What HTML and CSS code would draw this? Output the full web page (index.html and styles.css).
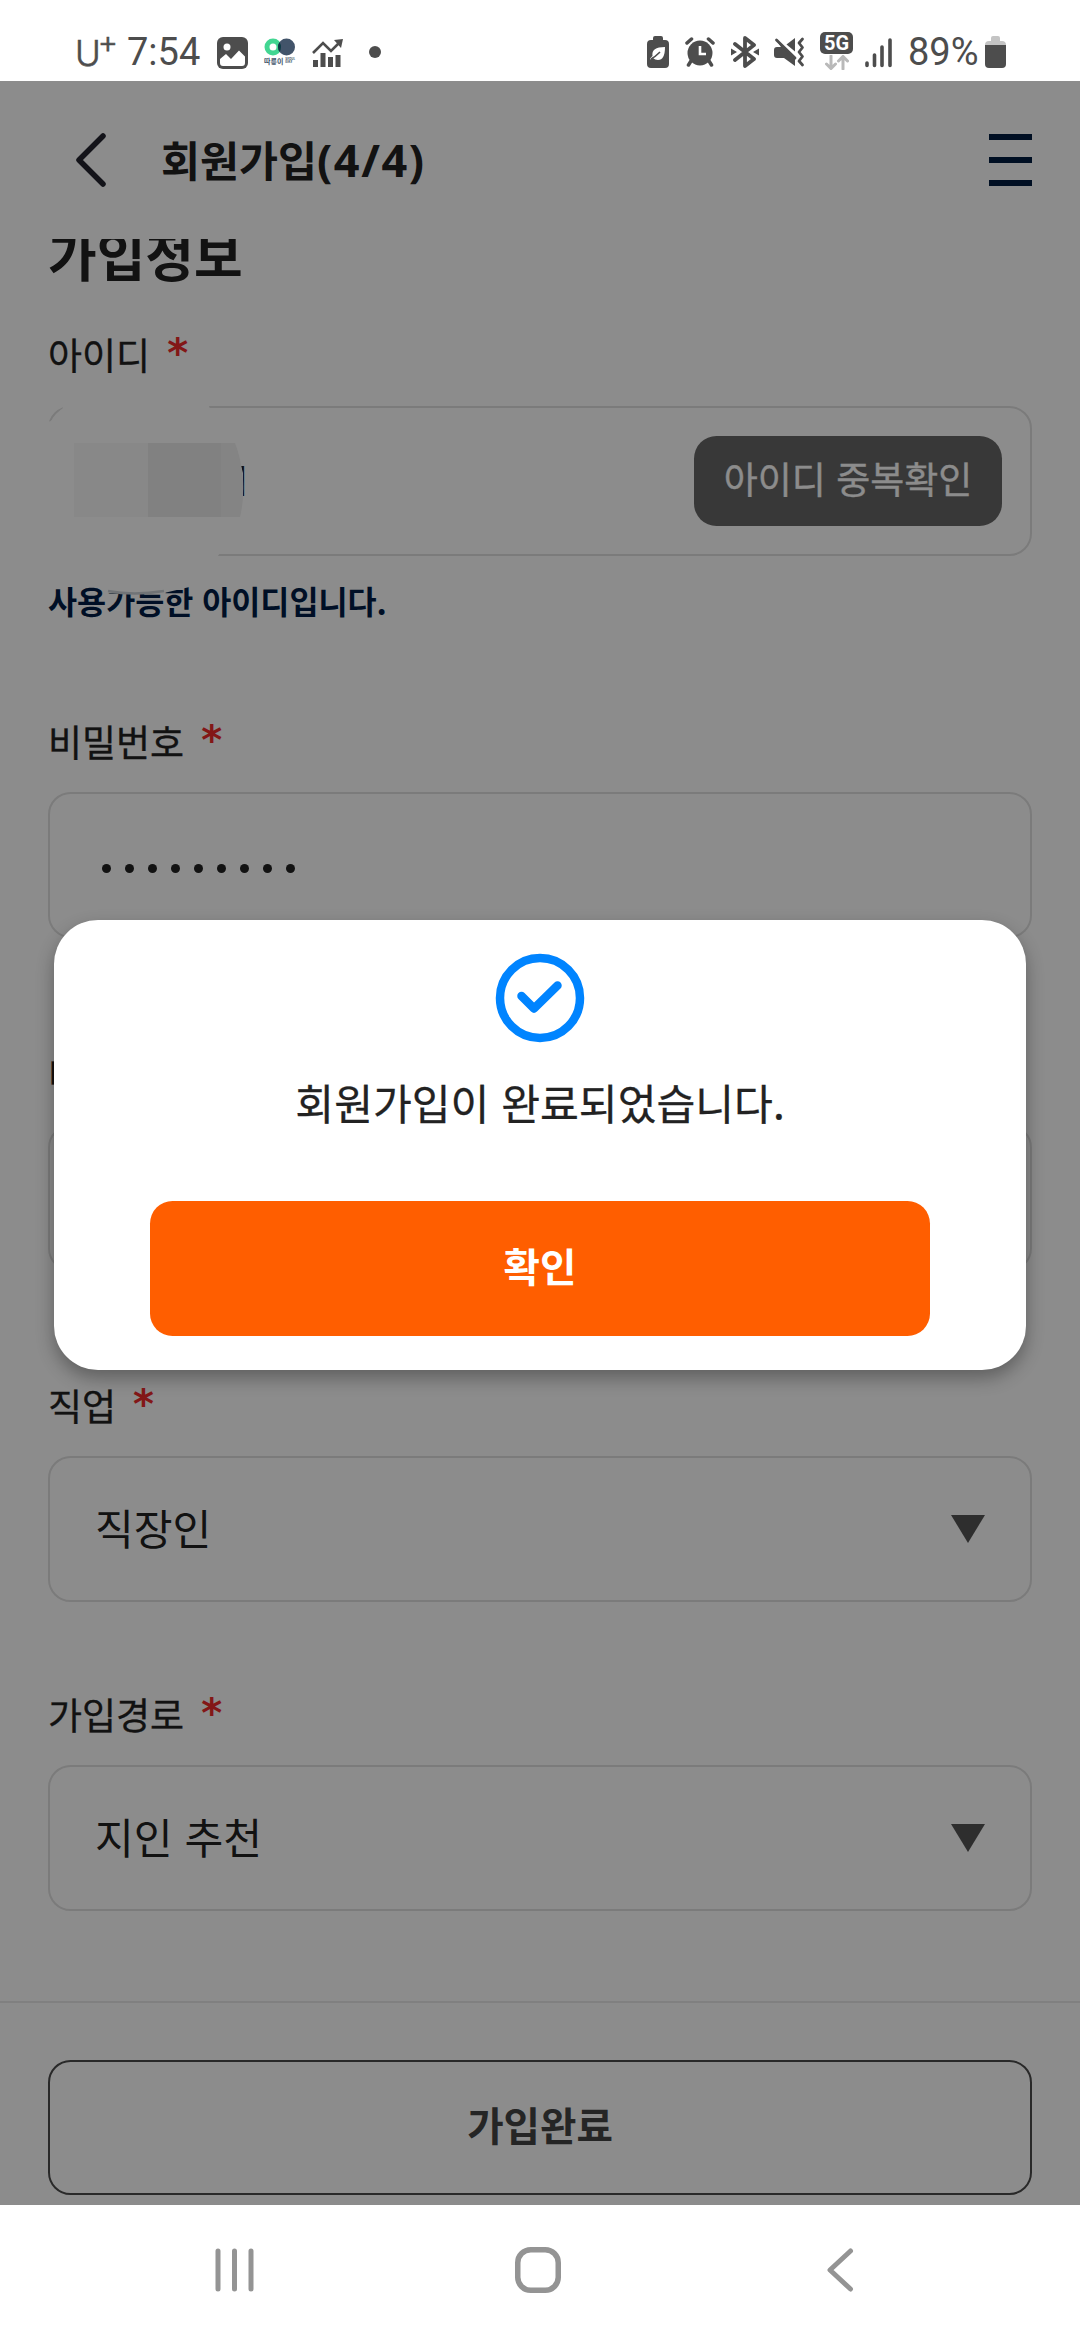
FILE: index.html
```html
<!DOCTYPE html>
<html lang="ko">
<head>
<meta charset="utf-8">
<title>회원가입</title>
<link rel="stylesheet" href="styles.css">
</head>
<body>
<div class="status">
  <div class="status-left">
    <span class="carrier">U<span class="plus">+</span></span>
    <span class="clock">7:54</span>
    <svg class="ic-image" width="32" height="32" viewBox="0 0 32 32"><rect x="0" y="0" width="31" height="32" rx="6" fill="#4d4d4d"/><circle cx="10" cy="10" r="3.500" fill="#fff"/><path d="M3 22 L9 17 L14 22 L22 13.500 L28 19.500 V26 Q28 29 25 29 H6 Q3 29 3 26Z" fill="#fff"/></svg>
    <span class="bike">
      <svg width="32" height="18" viewBox="0 0 32 18"><circle cx="9" cy="9" r="6" fill="none" stroke="#42d692" stroke-width="5"/><circle cx="22.500" cy="9" r="8.500" fill="#42546a"/><path d="M15.500 4 Q18.500 9 15.500 14 Q12.500 9 15.500 4Z" fill="#0d3b46"/></svg>
      <span class="bike-name">따릉이<small>SEOUL<br>BIKE</small></span>
    </span>
    <svg class="ic-chart" width="32" height="30" viewBox="0 0 32 30"><path d="M1 14 L11 4 L19 12 L28 3" fill="none" stroke="#4d4d4d" stroke-width="2.600"/><path d="M22 1 L31 0 L29 9Z" fill="#4d4d4d"/><path d="M1 21h5v7H1zM8.500 14h5v14h-5zM16 18h5v10h-5zM23.500 16h5v12h-5z" fill="#4d4d4d"/></svg>
    <span class="dot"></span>
  </div>
  <div class="status-right">
    <svg class="ic-eco" width="22" height="32" viewBox="0 0 22 32"><path d="M6 4V2Q6 0 8 0h6q2 0 2 2v2h2q4 0 4 4v20q0 4-4 4H4q-4 0-4-4V8q0-4 4-4z" fill="#4d4d4d"/><path d="M18 11 Q18 24 11 24 Q8 24 6 22 Q4 24 3 23 Q4 21 5.500 20 Q4 11 18 11Z" fill="#fff"/><path d="M4 23 Q8 21 13 16" stroke="#4d4d4d" stroke-width="1.600" fill="none"/></svg>
    <svg class="ic-alarm" width="30" height="30" viewBox="0 0 30 30"><circle cx="15" cy="16" r="12.500" fill="#4d4d4d"/><path d="M2 6 L6.500 2 M28 6 L23.500 2" stroke="#4d4d4d" stroke-width="3.500" stroke-linecap="round"/><path d="M6 24 L3.500 28 M24 24 L26.500 28" stroke="#4d4d4d" stroke-width="3.500" stroke-linecap="round"/><path d="M15 9v8h6" fill="none" stroke="#fff" stroke-width="2.600"/></svg>
    <svg class="ic-bt" width="28" height="32" viewBox="0 0 28 32"><path d="M4 8 L23 23 L14 30 V2 L23 9 L4 24" fill="none" stroke="#4d4d4d" stroke-width="3.800" stroke-linejoin="round" stroke-linecap="round"/><path d="M0 12.500 L6 16 L0 19.500Z M28 12.500 L22 16 L28 19.500Z" fill="#4d4d4d"/></svg>
    <svg class="ic-mute" width="31" height="30" viewBox="0 0 31 30"><path d="M2 3 L21 22 V29 L10 21 H3 Q0 21 0 18 V13 Q0 10 3 10 H7Z" fill="#4d4d4d"/><path d="M2.500 3 L21 21" stroke="#4d4d4d" stroke-width="2.800" stroke-linecap="round"/><path d="M12.500 7.500 L21 1 V14.500Z" fill="#4d4d4d"/><path d="M28.500 2 L25 6 L28.500 10.500 L25 15 L28.500 19.500 L25 24 L28.500 28" fill="none" stroke="#4d4d4d" stroke-width="2.800" stroke-linejoin="round" stroke-linecap="round"/></svg>
    <div class="net"><span class="net-badge">5G</span><svg width="24" height="15" viewBox="0 0 24 15"><path d="M6 1v12M1.500 9 L6 13.500 L10.500 9M18 14V2M13.500 6 L18 1.500 L22.500 6" fill="none" stroke="#b9b9b9" stroke-width="3" stroke-linecap="round"/></svg></div>
    <svg class="ic-signal" width="28" height="30" viewBox="0 0 28 30"><path d="M2 25v2.500M9.500 17v10.500M17 9v18.500M25 2v25.500" stroke="#4d4d4d" stroke-width="3.600" stroke-linecap="round"/></svg>
    <span class="percent">89%</span>
    <svg class="ic-batt" width="22" height="32" viewBox="0 0 22 32"><path d="M6 5V2Q6 0 8 0h5q2 0 2 2v3h2q4 0 4 4v1H0V9q0-4 4-4z" fill="#c4c4c4"/><path d="M0 9h21v19q0 4-4 4H4q-4 0-4-4z" fill="#4d4d4d"/></svg>
  </div>
</div>

<main class="app">
  <header class="header">
    <svg width="32" height="56" viewBox="0 0 32 56"><path d="M28 4 L4 28 L28 52" fill="none" stroke="#23242f" stroke-width="5.500" stroke-linecap="round" stroke-linejoin="round"/></svg>
    <h1 class="title">회원가입<span class="step">(4/4)</span></h1>
    <div class="menu"><i></i><i></i><i></i></div>
  </header>
  <section class="form">
    <h2 class="heading">가입정보</h2>
    <div class="field field-id">
      <div class="label">아이디<span class="req">*</span></div>
      <div class="box box-id">
        <span class="id-value">1</span>
        <button class="check-btn">아이디 중복확인</button>
      </div>
      <p class="helper">사용가능한 아이디입니다.</p>
      <svg class="mask" width="210" height="200" viewBox="0 0 210 200">
        <path d="M-1 19 L3 18 Q8 10 15 5 V0 H160 L162 6 L187 40 L195 70 V100 L172 150 L150 182 L116 190 H60 L50 178 H-1Z" fill="#fff"/>
        <path d="M26 40H100V114H26Z" fill="#f8f8f8"/><path d="M100 40H173V114H100Z" fill="#ececec"/><path d="M173 40H187Q193 55 195 77Q196 98 192 114H173Z" fill="#f0f0f0"/>
        <path d="M60 188 Q85 193 116 188" fill="none" stroke="#ccd2d8" stroke-width="2.500"/>
      </svg>
    </div>
    <div class="field field-pw">
      <div class="label">비밀번호<span class="req">*</span></div>
      <div class="box"><span class="dots"><i></i><i></i><i></i><i></i><i></i><i></i><i></i><i></i><i></i></span></div>
    </div>
    <div class="field field-pw2">
      <div class="label">비밀번호 확인<span class="req">*</span></div>
      <div class="box"></div>
    </div>
    <div class="field field-job">
      <div class="label">직업<span class="req">*</span></div>
      <div class="box"><span class="value">직장인</span><svg width="34" height="28" viewBox="0 0 34 28"><path d="M0 0H34L17 28Z" fill="#555"/></svg></div>
    </div>
    <div class="field field-path">
      <div class="label">가입경로<span class="req">*</span></div>
      <div class="box"><span class="value">지인 추천</span><svg width="34" height="28" viewBox="0 0 34 28"><path d="M0 0H34L17 28Z" fill="#555"/></svg></div>
    </div>
  </section>
  <footer class="footer"><button class="submit">가입완료</button></footer>

  <div class="overlay">
    <div class="modal">
      <svg width="90" height="90" viewBox="0 0 90 90"><circle cx="45" cy="45" r="40" fill="none" stroke="#0084ff" stroke-width="8.500"/><path d="M26.500 43 L39 55.500 L62.500 32.500" fill="none" stroke="#0084ff" stroke-width="8.500" stroke-linecap="round" stroke-linejoin="round"/></svg>
      <p class="message">회원가입이 완료되었습니다.</p>
      <button class="ok">확인</button>
    </div>
  </div>
</main>

<nav class="nav">
  <svg width="40" height="46" viewBox="0 0 40 46"><path d="M4 4v38M20.500 4v38M37 4v38" stroke="#949494" stroke-width="5" stroke-linecap="round"/></svg>
  <svg class="home" width="46" height="46" viewBox="0 0 46 46"><rect x="2.750" y="2.750" width="40.500" height="40.500" rx="13" fill="none" stroke="#949494" stroke-width="5.500"/></svg>
  <svg width="28" height="46" viewBox="0 0 28 46"><path d="M24.500 4 L4 23 L24.500 42" fill="none" stroke="#949494" stroke-width="5" stroke-linecap="round" stroke-linejoin="round"/></svg>
</nav>
</body>
</html>
```
FILE: styles.css
```css
* { box-sizing: border-box; margin: 0; padding: 0; }
body {
  width: 1080px; height: 2340px; overflow: hidden;
  display: flex; flex-direction: column;
  background: #fff; color: #222;
  font-family: "Noto Sans CJK KR", "Noto Sans", sans-serif;
}
button { font-family: inherit; border: 0; }
svg { display: block; flex: none; }

/* status bar */
.status { height: 81px; flex: none; display: flex; justify-content: space-between; padding: 0 73px 0 75px; font-family: Roboto, sans-serif; color: #4d4d4d; }
.status-left, .status-right { display: flex; align-items: flex-start; }
.carrier { width: 52px; margin-top: 31px; font: 300 35px/44px Inter, sans-serif; display: flex; -webkit-text-stroke: 0.6px #4d4d4d; }
.plus { margin: -11px 0 0 -3px; font-size: 31px; }
.clock, .percent { margin-top: 30px; font-size: 38px; line-height: 44px; white-space: nowrap; }
.clock { width: 90px; }
.ic-image { margin-top: 37px; }
.bike { width: 32px; margin: 38px 0 0 15px; }
.bike-name { display: flex; align-items: center; gap: 2px; font: 700 7px/10px "Noto Sans CJK KR", sans-serif; white-space: nowrap; color: #42546a; }
.bike-name small { font-size: 3px; line-height: 3px; }
.ic-chart { margin: 39px 0 0 16px; }
.dot { width: 12px; height: 12px; border-radius: 50%; background: #4d4d4d; margin: 46px 0 0 25px; }
.ic-eco { margin-top: 36px; }
.ic-alarm { margin: 37px 0 0 16px; }
.ic-bt { margin: 36px 0 0 16px; }
.ic-mute { margin: 37px 0 0 15px; }
.net { width: 33px; margin: 32px 0 0 15px; display: flex; flex-direction: column; align-items: center; gap: 1px; }
.net-badge { width: 33px; height: 22px; border-radius: 5px; background: #4d4d4d; color: #fff; font-size: 20px; line-height: 23px; font-weight: 700; text-align: center; }
.ic-signal { margin: 38px 0 0 12px; }
.percent { width: 77px; margin-left: 15px; }
.ic-batt { margin-top: 36px; }

/* page */
.app { position: relative; height: 2124px; flex: none; display: flex; flex-direction: column; overflow: hidden; }
.header { height: 158px; flex: none; display: flex; align-items: center; padding: 0 48px 0 75px; }
.title { flex: 1; margin: -3px 0 0 54px; font-size: 42.400px; line-height: 60px; font-weight: 700; }
.step { font-family: "Noto Sans", sans-serif; font-size: 45px; line-height: 1; letter-spacing: 1.600px; }
.menu { width: 43px; display: flex; flex-direction: column; gap: 17px; }
.menu i { height: 6px; background: #001d40; }

.form { height: 1762px; flex: none; overflow: hidden; padding: 0 48px; }
.heading { margin-top: -15px; font-size: 52.900px; line-height: 60px; font-weight: 700; }
.field { position: relative; }
.field-id { margin-top: 43px; }
.field-pw { margin-top: 91px; }
.field-pw2 { margin-top: 109px; }
.field-job { margin-top: 107px; }
.field-path { margin-top: 85px; }
.label { display: flex; height: 54px; margin-bottom: 24px; font-size: 37px; line-height: 54px; font-weight: 400; -webkit-text-stroke: 0.3px #222; }
.field-id .label { margin-bottom: 25px; }
.req { margin-left: 17px; color: #ee2a2a; font: 700 40px/52px "DejaVu Sans", sans-serif; -webkit-text-stroke: 0; }
.box { height: 146px; border: 2px solid #e0e0e0; border-radius: 22.500px; padding: 0 45px; display: flex; align-items: center; justify-content: space-between; font-size: 42.200px; }
.box-id { height: 150px; padding-right: 28px; }
.value { padding-bottom: 6px; }
.id-value { margin-left: 134px; padding-bottom: 4px; font-family: "Noto Sans", sans-serif; }
.check-btn { width: 308px; height: 90px; padding-bottom: 7px; border-radius: 22.500px; background: #676767; color: #fff; font-size: 37px; font-weight: 400; -webkit-text-stroke: 0.3px #fff; }
.helper { margin-top: 21px; font-size: 31.600px; line-height: 46px; font-weight: 700; color: #001d45; }
.mask { position: absolute; left: 0; top: 76px; overflow: visible; }
.dots { display: flex; gap: 14px; margin: 6px 0 0 7px; }
.dots i { width: 9px; height: 9px; border-radius: 50%; background: #222; }

.footer { flex: 1; border-top: 2px solid #e9e9e9; padding: 57px 48px 0; }
.submit { width: 984px; height: 135px; padding-bottom: 8px; border: 2px solid #4c4c4c; border-radius: 22.500px; background: #fff; color: #444; font-size: 39.600px; font-weight: 700; display: block; }

/* dialog */
.overlay { position: absolute; inset: 0; background: rgba(0, 0, 0, .45); padding: 839px 54px 0; }
.modal { height: 450px; border-radius: 44px; background: #fff; box-shadow: 0 8px 18px rgba(0, 0, 0, .32); display: flex; flex-direction: column; align-items: center; padding-top: 33px; }
.message { margin-top: 29px; font-size: 42.200px; line-height: 60px; font-weight: 400; -webkit-text-stroke: 0.3px #222; }
.ok { width: 780px; height: 135px; margin-top: 69px; padding-bottom: 8px; flex: none; border-radius: 22.500px; background: #ff5e00; color: #fff; font-size: 39.600px; font-weight: 700; }

/* system navigation */
.nav { height: 135px; display: flex; align-items: flex-start; padding: 42px 226px 0 214px; justify-content: space-between; }
.home { margin-right: 5px; }
```
